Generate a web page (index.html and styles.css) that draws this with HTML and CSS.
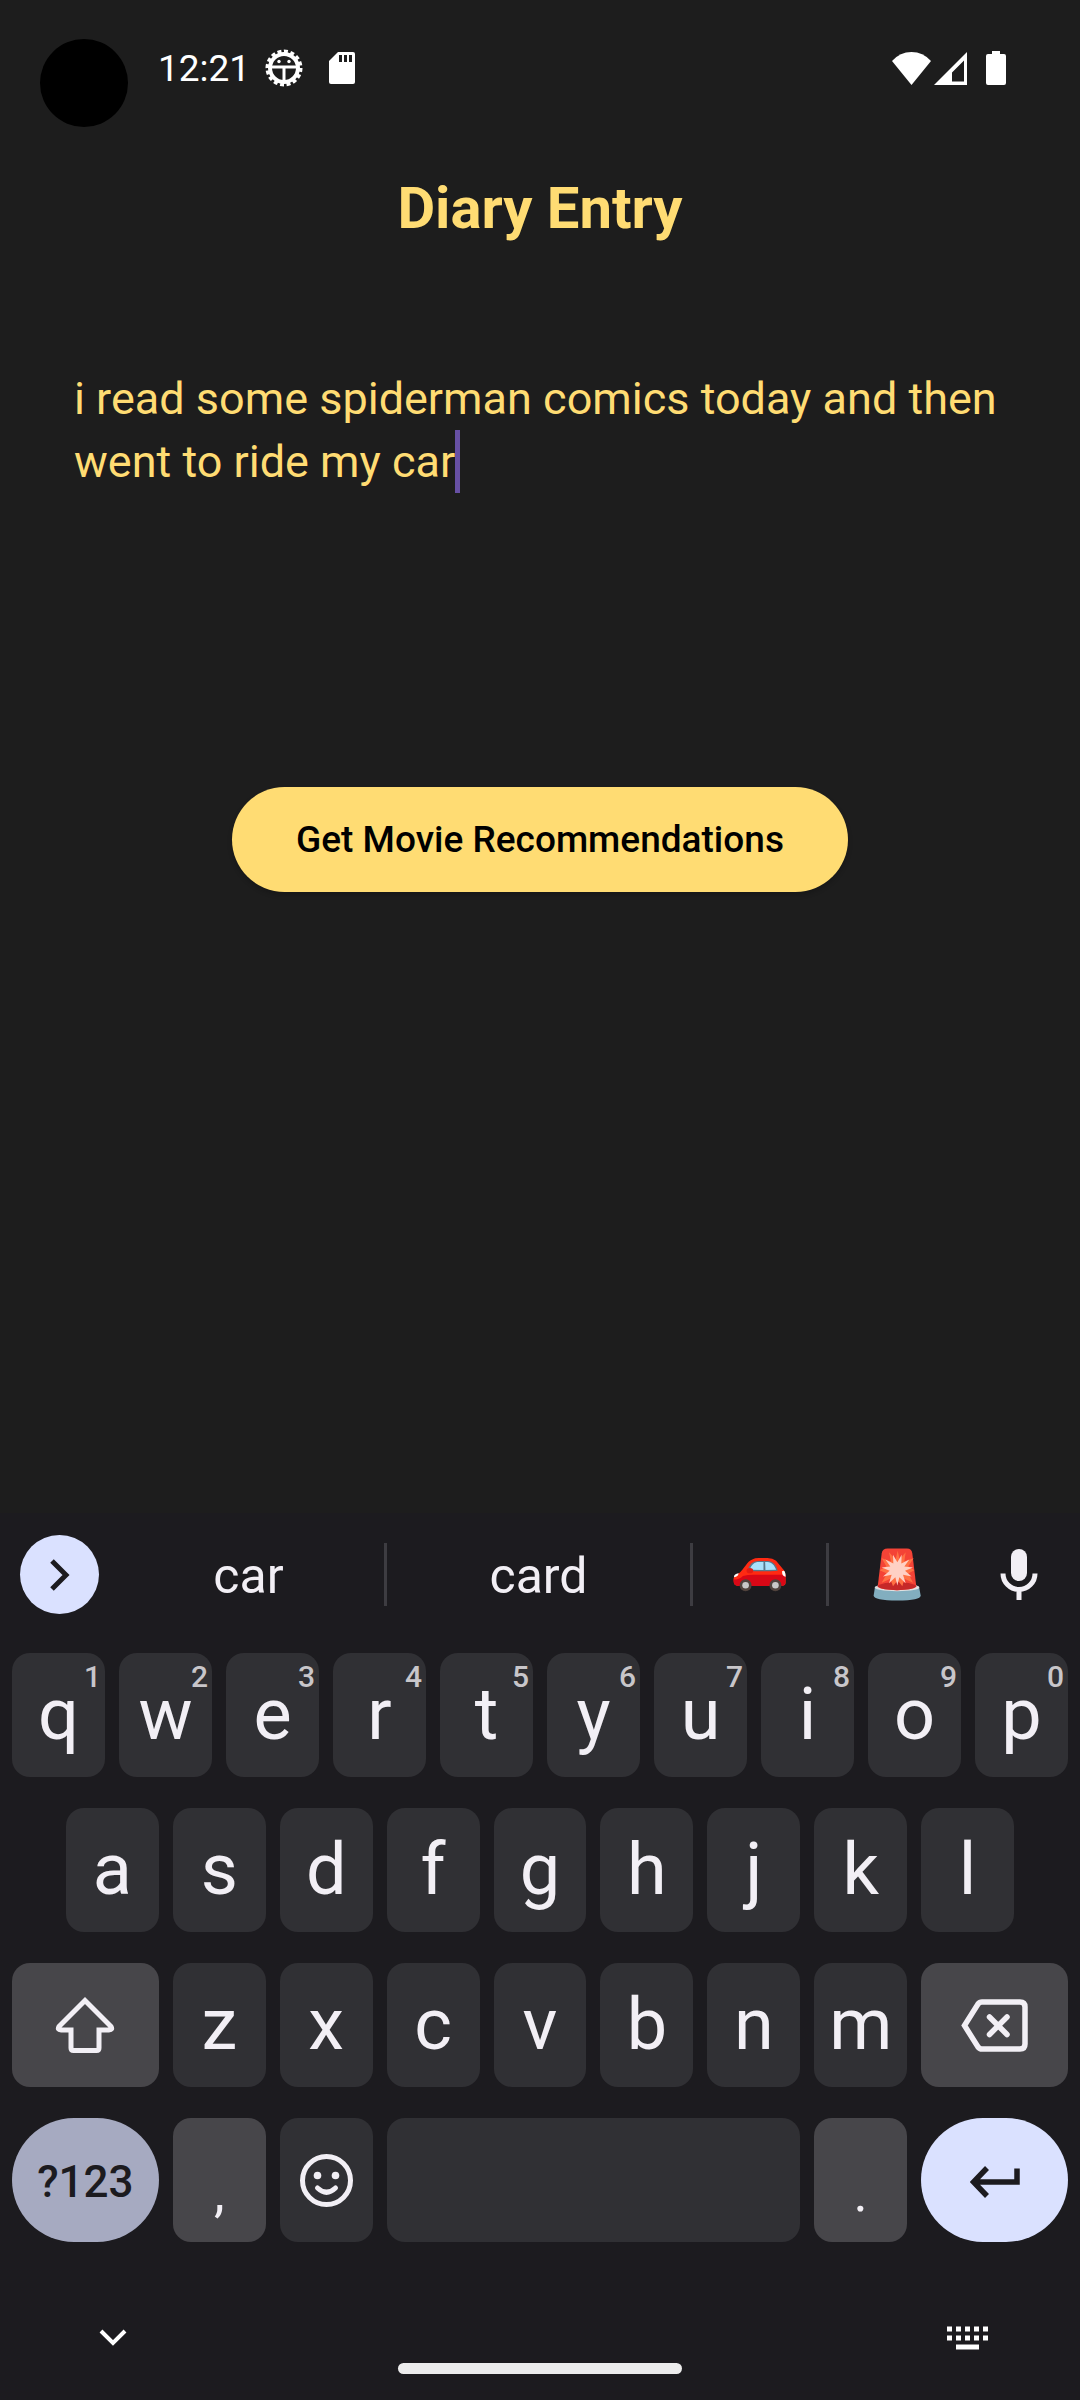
FILE: index.html
```html
<!DOCTYPE html>
<html lang="en">
<head>
<meta charset="utf-8">
<meta name="viewport" content="width=device-width, initial-scale=1">
<title>Diary Entry</title>
<link rel="stylesheet" href="styles.css">
</head>
<body>
<div class="screen">
  <header class="status-bar">
    <span class="camera"></span>
    <time class="clock">12:21</time>
    <svg class="gear" width="38" height="38" viewBox="0 0 38 38" fill="none" stroke="#fff">
      <circle cx="19" cy="19" r="14" stroke-width="4"/>
      <circle cx="19" cy="19" r="16.5" stroke-width="4" pathLength="32" stroke-dasharray="1.2 0.8"/>
      <path d="M5 18H33M19 18V33" stroke-width="3"/>
      <circle cx="14" cy="12.500" r="1.700" fill="#fff" stroke="none"/>
      <circle cx="24" cy="12.500" r="1.700" fill="#fff" stroke="none"/>
    </svg>
    <svg class="sd" width="26" height="32" viewBox="0 0 26 32">
      <path d="M9 0H24Q26 0 26 2V30Q26 32 24 32H2Q0 32 0 30V9Z" fill="#fff"/>
      <path d="M10 3h3v7h-3zM15 3h3v7h-3zM20 3h3v7h-3z" fill="#1d1d1d"/>
    </svg>
    <div class="signals">
      <svg width="39" height="33" viewBox="0 0 39 33"><path d="M0 9Q8 0 19.500 0T39 9L19.500 33Z" fill="#fff"/></svg>
      <svg width="33" height="33" viewBox="0 0 33 33"><path d="M33 0V33H0ZM30 8.500 18 20.500V29.500H30Z" fill="#fff" fill-rule="evenodd"/></svg>
      <svg class="battery" width="20" height="34" viewBox="0 0 20 34"><path d="M6 0h8v3h4q2 0 2 2v27q0 2-2 2H2q-2 0-2-2V5q0-2 2-2h4z" fill="#fff"/></svg>
    </div>
  </header>

  <main class="diary">
    <h1 class="title">Diary Entry</h1>
    <div class="entry">
      <textarea class="entry-text" rows="5" aria-label="Diary entry" spellcheck="false">i read some spiderman comics today and then went to ride my car</textarea>
      <span class="caret"></span>
    </div>
    <button class="recommend" type="button">Get Movie Recommendations</button>
  </main>

  <section class="keyboard" aria-label="Keyboard">
    <div class="suggestions">
      <button class="expand" type="button" aria-label="More tools">
        <svg width="20" height="32" viewBox="0 0 20 32" fill="none" stroke="#1c1b1f" stroke-width="5"><path d="M2 2 16 16 2 30"/></svg>
      </button>
      <button class="word first" type="button">car</button>
      <button class="word second" type="button">card</button>
      <button class="word third" type="button" aria-label="Car emoji">
        <svg width="53" height="34" viewBox="0 0 160 102">
          <path d="M2 70C0 56 6 50 20 44C34 32 42 10 58 4Q66 0 78 0H104Q120 0 130 8L150 32Q159 40 159 58V74Q159 84 148 84H16Q2 84 2 70Z" fill="#ff2a12"/>
          <path d="M2 64Q18 66 30 54Q44 50 62 50H158V72Q158 84 146 84H16Q2 84 2 70Z" fill="#d90716"/>
          <path d="M44 38C50 18 60 9 78 9H104C122 9 130 22 135 38Q90 42 44 38Z" fill="#58788b"/>
          <path d="M51 35C56 20 64 12 78 12H92V36ZM97 12H104C118 12 126 24 130 35L98 36Z" fill="#a8e1fb"/>
          <ellipse cx="51" cy="38" rx="10" ry="8" fill="#e31b13"/>
          <path d="M3 58Q2 48 17 46Q16 57 3 58ZM148 40Q158 32 159 56Q148 56 148 40Z" fill="#fff"/>
          <g fill="#51433d"><circle cx="38" cy="82" r="18"/><circle cx="128" cy="82" r="18"/></g>
          <g fill="#c9c9c9"><circle cx="38" cy="82" r="10"/><circle cx="128" cy="82" r="10"/></g>
        </svg>
      </button>
      <button class="word fourth" type="button" aria-label="Siren emoji">
        <svg width="48" height="53" viewBox="0 0 144 158">
          <path d="M6 116Q12 108 74 108T138 116L143 142Q143 157 73 157T2 142Z" fill="#82aebf"/>
          <path d="M5 118Q10 108 74 108T139 118Q138 128 72 129Q8 128 5 118Z" fill="#e0e0e0"/>
          <path d="M14 116 26 16Q28 1 44 1H102Q116 1 118 16L130 116Q116 126 72 126T14 116Z" fill="#f44336"/>
          <path d="M15 112Q30 102 72 102T129 112L130 116Q116 126 72 126T14 116Z" fill="#c62828"/>
          <path d="M74 8 80 34 98 12 94 40 122 30 106 54 124 66 106 76 120 104 94 92 88 114 74 96 60 114 52 92 26 104 42 76 20 66 40 54 26 30 54 40 48 12 68 34Z" fill="#ff7043"/>
          <path transform="translate(73 65)" d="M0 47-6 22-25 40-17 15-43 20-23 3-47-7-21-10-36-31-12-19-13-45 0-23 13-45 12-19 36-31 21-10 47-7 23 3 43 20 17 15 25 40 6 22Z" fill="#ffd0c4"/>
        </svg>
      </button>
      <button class="mic" type="button" aria-label="Voice input">
        <svg width="38" height="51" viewBox="0 0 38 51"><rect x="11" y="0" width="16" height="32" rx="8" fill="#f2eff5"/><path d="M3 24.500A16 16 0 0 0 35 24.500M19 40V51" fill="none" stroke="#f2eff5" stroke-width="5"/></svg>
      </button>
    </div>

    <div class="keys">
      <div class="row">
        <button class="key" type="button">q<span class="hint">1</span></button>
        <button class="key" type="button">w<span class="hint">2</span></button>
        <button class="key" type="button">e<span class="hint">3</span></button>
        <button class="key" type="button">r<span class="hint">4</span></button>
        <button class="key" type="button">t<span class="hint">5</span></button>
        <button class="key" type="button">y<span class="hint">6</span></button>
        <button class="key" type="button">u<span class="hint">7</span></button>
        <button class="key" type="button">i<span class="hint">8</span></button>
        <button class="key" type="button">o<span class="hint">9</span></button>
        <button class="key" type="button">p<span class="hint">0</span></button>
      </div>
      <div class="row inset">
        <button class="key" type="button">a</button>
        <button class="key" type="button">s</button>
        <button class="key" type="button">d</button>
        <button class="key" type="button">f</button>
        <button class="key" type="button">g</button>
        <button class="key" type="button">h</button>
        <button class="key" type="button">j</button>
        <button class="key" type="button">k</button>
        <button class="key" type="button">l</button>
      </div>
      <div class="row">
        <button class="key wide light" type="button" aria-label="Shift">
          <svg width="60" height="58" viewBox="0 0 60 58" fill="none" stroke="#f2eff5" stroke-width="5"><path d="M30 4.500 4 30.500Q2 34 6 34H16V52Q16 54.500 18.500 54.500H41.500Q44 54.500 44 52V34H54Q58 34 56 30.500Z"/></svg>
        </button>
        <button class="key" type="button">z</button>
        <button class="key" type="button">x</button>
        <button class="key" type="button">c</button>
        <button class="key" type="button">v</button>
        <button class="key" type="button">b</button>
        <button class="key" type="button">n</button>
        <button class="key" type="button">m</button>
        <button class="key wide light" type="button" aria-label="Backspace">
          <svg width="67" height="53" viewBox="0 0 67 53" fill="none" stroke="#f2eff5" stroke-width="5.500"><path d="M3.500 26.500 17 5Q18.500 3 21 3H59Q64 3 64 8V45Q64 50 59 50H21Q18.500 50 17 48Z"/><path d="M28.500 18 46 35.500M46 18 28.500 35.500" stroke-linecap="round"/></svg>
        </button>
      </div>
      <div class="row">
        <button class="key wide symbols" type="button">?123</button>
        <button class="key light mark" type="button">,</button>
        <button class="key" type="button" aria-label="Emoji">
          <svg width="53" height="53" viewBox="0 0 53 53" fill="none" stroke="#f2eff5" stroke-width="5"><circle cx="26.500" cy="26.500" r="24"/><path d="M17.500 34Q26.500 42.500 35.500 34" stroke-linecap="round"/><g fill="#f2eff5" stroke="none"><circle cx="17.500" cy="21.500" r="3.800"/><circle cx="35.500" cy="21.500" r="3.800"/></g></svg>
        </button>
        <button class="key space" type="button" aria-label="Space"></button>
        <button class="key light mark" type="button">.</button>
        <button class="key wide enter" type="button" aria-label="Enter">
          <svg width="50" height="32" viewBox="0 0 50 32" fill="none" stroke="#1c1b1f" stroke-width="5.500"><path d="M4 16H47V2.500M17 2 3.500 16 17 30"/></svg>
        </button>
      </div>
    </div>

    <nav class="nav-bar">
      <button class="nav-button" type="button" aria-label="Hide keyboard">
        <svg width="42" height="18" viewBox="0 0 42 18" fill="none" stroke="#fff" stroke-width="4"><path d="M9 2 21 14 33 2"/></svg>
      </button>
      <span class="home"></span>
      <button class="nav-button end" type="button" aria-label="Switch keyboard">
        <svg width="41" height="24" viewBox="0 0 41 24" fill="none" stroke="#fff" stroke-width="5"><path d="M0 3H41M0 12H41" stroke-dasharray="5 4"/><path d="M9 21H32"/></svg>
      </button>
    </nav>
  </section>
</div>
</body>
</html>
```

FILE: styles.css
```css
* {
  box-sizing: border-box;
}

body {
  margin: 0;
  background: #1d1d1d;
  font-family: Roboto, "Liberation Sans", sans-serif;
}

button {
  margin: 0;
  padding: 0;
  border: 0;
  background: none;
  color: inherit;
  font: inherit;
}

svg {
  display: block;
  flex: none;
}

.screen {
  display: flex;
  flex-direction: column;
  min-height: 100vh;
}

/* Status bar */
.status-bar {
  position: relative;
  display: flex;
  align-items: center;
  height: 136px;
  padding: 0 74px 0 158px;
  color: #fff;
}

.camera {
  position: absolute;
  top: 39px;
  left: 40px;
  width: 88px;
  height: 88px;
  border-radius: 50%;
  background: #000;
}

.clock {
  padding-top: 2px;
  font-size: 37px;
  line-height: 44px;
}

.gear {
  margin-left: 15px;
}

.sd {
  margin-left: 26px;
}

.signals {
  display: flex;
  align-items: center;
  gap: 3px;
  margin-left: auto;
}

.battery {
  margin-left: 16px;
}

/* Diary */
.diary {
  flex: 1;
  display: flex;
  flex-direction: column;
  align-items: center;
  padding: 38px 74px;
  color: #ffdc73;
}

.title {
  margin: 0;
  font-size: 58px;
  line-height: 68px;
  font-weight: 700;
}

.entry {
  position: relative;
  width: 100%;
  margin-top: 125px;
}

.entry-text {
  display: block;
  width: 100%;
  margin: 0;
  padding: 0;
  border: 0;
  outline: 0;
  resize: none;
  overflow: hidden;
  background: none;
  color: inherit;
  font-family: inherit;
  font-size: 45px;
  line-height: 63px;
}

.caret {
  position: absolute;
  top: 63px;
  left: 381px;
  width: 5px;
  height: 63px;
  background: #6750a4;
}

.recommend {
  margin-top: 105px;
  padding: 0 64px;
  border-radius: 53px;
  background: #ffdc73;
  box-shadow: 0 3px 5px rgba(0, 0, 0, 0.2);
  color: #000;
  font-size: 37px;
  line-height: 105px;
  font-weight: 500;
}

/* Keyboard */
.keyboard {
  padding-top: 22px;
  background: #1c1b1f;
  color: #f2eff5;
}

.suggestions {
  display: flex;
  align-items: center;
  height: 79px;
  padding: 0 8px 0 20px;
}

.expand {
  display: flex;
  align-items: center;
  justify-content: center;
  flex: none;
  width: 79px;
  height: 79px;
  margin-right: 14px;
  border-radius: 50%;
  background: #dae1ff;
}

.word {
  display: flex;
  align-items: center;
  justify-content: center;
  height: 63px;
  border-right: 3px solid #3d3c41;
  font-size: 50px;
  line-height: 63px;
}

.first {
  flex: 271;
  padding-top: 4px;
}

.second {
  flex: 303;
  padding-top: 4px;
}

.third {
  flex: 133;
}

.fourth {
  flex: 136;
  border-right: 0;
}

.mic {
  display: flex;
  justify-content: center;
  flex: 107;
}

.keys {
  display: flex;
  flex-direction: column;
  gap: 31px;
  padding: 39px 12px 0;
}

.row {
  display: flex;
  gap: 14px;
}

.inset {
  padding: 0 54px;
}

.key {
  position: relative;
  display: flex;
  align-items: center;
  justify-content: center;
  flex: 93 1 0;
  min-width: 0;
  height: 124px;
  border-radius: 18px;
  background: #303034;
  font-size: 72px;
  line-height: 120px;
}

.hint {
  position: absolute;
  top: 6px;
  right: 4px;
  color: #c8c6ca;
  font-size: 30px;
  line-height: 36px;
  font-weight: 500;
}

.light {
  background: #47464a;
}

.wide {
  flex-grow: 147;
}

.space {
  flex-grow: 414;
}

.mark {
  padding-top: 26px;
  font-size: 54px;
  line-height: 96px;
}

.symbols {
  padding-top: 4px;
  border-radius: 62px;
  background: #a6aac1;
  color: #1c1b1f;
  font-size: 44px;
  font-weight: 500;
}

.enter {
  padding-top: 4px;
  border-radius: 62px;
  background: #dae1ff;
}

/* Navigation */
.nav-bar {
  display: grid;
  grid-template-columns: 1fr 284px 1fr;
  align-items: center;
  height: 158px;
  padding: 34px 92px 0;
}

.nav-button {
  display: flex;
}

.end {
  justify-content: flex-end;
}

.home {
  align-self: end;
  height: 11px;
  margin-bottom: 26px;
  border-radius: 6px;
  background: #ececec;
}
```
